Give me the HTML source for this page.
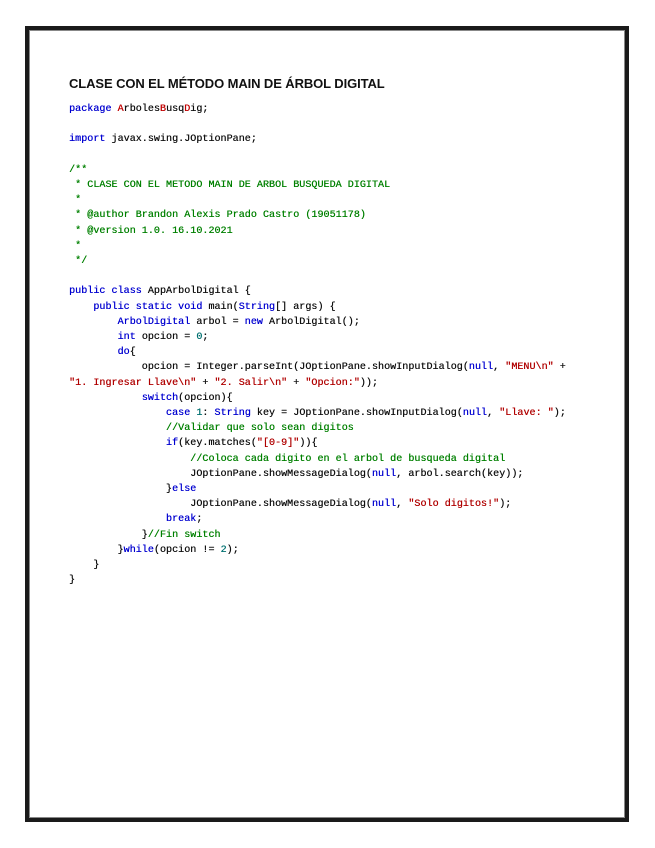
<!DOCTYPE html>
<html><head><meta charset="utf-8"><style>
html,body{margin:0;padding:0;background:#fff;}
body{width:655px;height:848px;position:relative;overflow:hidden;}
.box{position:absolute;left:25px;top:26px;width:596px;height:788px;border:4px solid #1a1a1a;box-shadow:inset 0 0 0 1px #888;}
h1{position:absolute;left:69px;top:76px;margin:0;font:bold 13px "Liberation Sans",sans-serif;color:#111;letter-spacing:-0.1px;white-space:nowrap;}
pre{position:absolute;left:69px;top:102px;margin:0;font:10.1px/15.2px "Liberation Mono",monospace;color:#111;text-shadow:0.25px 0 0 currentColor;}
.k{color:#0000d0;}.s{color:#b00000;}.c{color:#008000;}.n{color:#007070;}.r{color:#c00000;}
</style></head><body>
<div class="box"></div>
<h1>CLASE CON EL MÉTODO MAIN DE ÁRBOL DIGITAL</h1>
<pre><span class="k">package</span> <span class="r">A</span>rboles<span class="r">B</span>usq<span class="r">D</span>ig;

<span class="k">import</span> javax.swing.JOptionPane;

<span class="c">/**
 * CLASE CON EL METODO MAIN DE ARBOL BUSQUEDA DIGITAL
 *
 * @author Brandon Alexis Prado Castro (19051178)
 * @version 1.0. 16.10.2021
 *
 */</span>

<span class="k">public class</span> AppArbolDigital {
    <span class="k">public static void</span> main(<span class="k">String</span>[] args) {
        <span class="k">ArbolDigital</span> arbol = <span class="k">new</span> ArbolDigital();
        <span class="k">int</span> opcion = <span class="n">0</span>;
        <span class="k">do</span>{
            opcion = Integer.parseInt(JOptionPane.showInputDialog(<span class="k">null</span>, <span class="s">"MENU\n"</span> +
<span class="s">"1. Ingresar Llave\n"</span> + <span class="s">"2. Salir\n"</span> + <span class="s">"Opcion:"</span>));
            <span class="k">switch</span>(opcion){
                <span class="k">case</span> <span class="n">1</span>: <span class="k">String</span> key = JOptionPane.showInputDialog(<span class="k">null</span>, <span class="s">"Llave: "</span>);
                <span class="c">//Validar que solo sean digitos</span>
                <span class="k">if</span>(key.matches(<span class="s">"[0-9]"</span>)){
                    <span class="c">//Coloca cada digito en el arbol de busqueda digital</span>
                    JOptionPane.showMessageDialog(<span class="k">null</span>, arbol.search(key));
                }<span class="k">else</span>
                    JOptionPane.showMessageDialog(<span class="k">null</span>, <span class="s">"Solo digitos!"</span>);
                <span class="k">break</span>;
            }<span class="c">//Fin switch</span>
        }<span class="k">while</span>(opcion != <span class="n">2</span>);
    }
}</pre>
</body></html>
